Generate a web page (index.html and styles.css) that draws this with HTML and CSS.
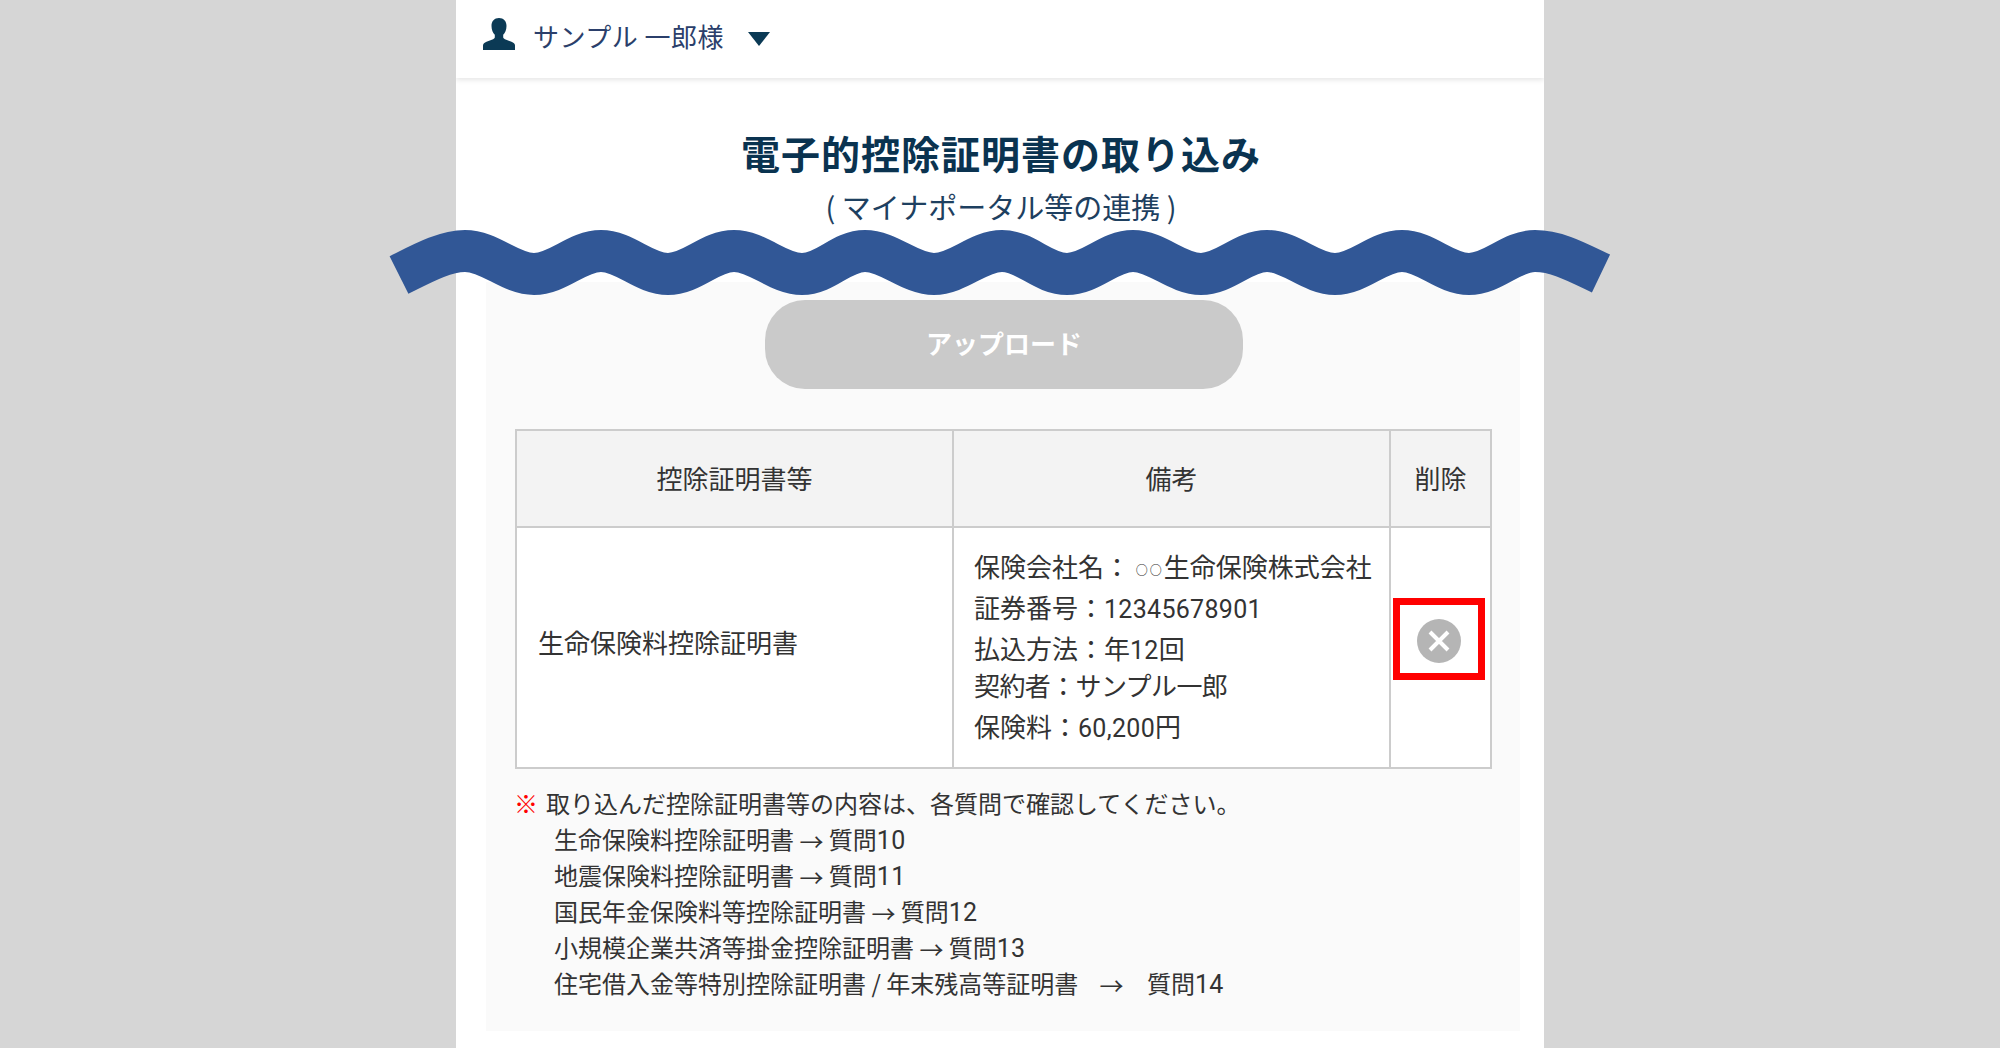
FILE: index.html
```html
<!DOCTYPE html>
<html lang="ja">
<head>
<meta charset="utf-8">
<title>電子的控除証明書の取り込み</title>
<link rel="stylesheet" href="styles.css">
</head>
<body>
<div class="page">
  <header class="topbar">
    <svg class="user-icon" viewBox="0 0 32 32" aria-hidden="true"><path d="M16 0c4.600 0 7.500 3.200 7.500 8 0 3.800-1.500 7-3.300 8.800v2.400c0 1 1 1.700 3 2.500l5.300 2c2 .8 3.500 2 3.500 3.800V32H0v-4.500c0-1.800 1.500-3 3.500-3.800l5.300-2c2-.8 3-1.500 3-2.500v-2.400C10 15 8.500 11.800 8.500 8 8.500 3.200 11.400 0 16 0z"/></svg>
    <span class="user-name">サンプル 一郎様</span>
    <span class="caret"></span>
  </header>
  <section class="heading">
    <h1 class="title">電子的控除証明書の取り込み</h1>
    <p class="subtitle">( マイナポータル等の連携 )</p>
  </section>
  <main class="panel">
    <button class="upload" type="button">アップロード</button>
    <table class="doc-table">
      <colgroup><col class="col-a"><col class="col-b"><col class="col-c"></colgroup>
      <thead>
        <tr><th>控除証明書等</th><th>備考</th><th>削除</th></tr>
      </thead>
      <tbody>
        <tr>
          <td class="doc-name">生命保険料控除証明書</td>
          <td class="remarks">
            <div class="line">保険会社名： <span class="circles">○○</span>生命保険株式会社</div>
            <div class="line">証券番号：<span class="num">12345678901</span></div>
            <div class="line">払込方法：年<span class="num">12</span>回</div>
            <div class="line line-tight">契約者：サンプル一郎</div>
            <div class="line">保険料：<span class="num">60,200</span>円</div>
          </td>
          <td class="delete">
            <div class="highlight">
              <svg class="delete-icon" viewBox="0 0 44 44" aria-hidden="true"><circle cx="22" cy="22" r="22"/><path d="M13 13l18 18M31 13L13 31"/></svg>
            </div>
          </td>
        </tr>
      </tbody>
    </table>
    <div class="notes">
      <p class="note-head"><span class="mark">※</span>取り込んだ控除証明書等の内容は、各質問で確認してください。</p>
      <p class="note-item">生命保険料控除証明書 <span class="arrow">→</span> 質問<span class="num">10</span></p>
      <p class="note-item">地震保険料控除証明書 <span class="arrow">→</span> 質問<span class="num">11</span></p>
      <p class="note-item">国民年金保険料等控除証明書 <span class="arrow">→</span> 質問<span class="num">12</span></p>
      <p class="note-item">小規模企業共済等掛金控除証明書 <span class="arrow">→</span> 質問<span class="num">13</span></p>
      <p class="note-item">住宅借入金等特別控除証明書 / 年末残高等証明書 <span class="arrow wide-arrow">→</span> 質問<span class="num">14</span></p>
    </div>
  </main>
  <svg class="wave" viewBox="0 0 1240 90" aria-hidden="true"><path d="M9 46 C33 34 55 22 75 22 C100 22 120 45 144 45 C168 45 187 22 211 22 C235 22 254 45 278 45 C302 45 320 22 344 22 C368 22 388 45 412 45 C436 45 451 22 475 22 C499 22 520 45 544 45 C568 45 588 22 612 22 C636 22 653 45 677 45 C701 45 719 22 743 22 C767 22 787 45 811 45 C835 45 853 22 877 22 C901 22 921 45 945 45 C969 45 988 22 1012 22 C1036 22 1055 45 1079 45 C1103 45 1121 22 1145 22 C1167 22 1187 33 1211 44.500"/></svg>
</div>
</body>
</html>
```
FILE: styles.css
```css
* { box-sizing: border-box; }
html, body { margin: 0; height: 100%; }
body {
  background: #d6d6d6;
  font-family: "Noto Sans CJK JP", "Noto Sans", sans-serif;
  color: #333;
  overflow: hidden;
}
.page {
  position: relative;
  width: 1088px;
  height: 1048px;
  margin: 0 auto;
  background: #fff;
}
.topbar {
  display: flex;
  align-items: center;
  height: 78px;
  padding-left: 27px;
  background: #fff;
  box-shadow: 0 2px 5px rgba(0, 0, 0, .1);
  clip-path: inset(0 0 -10px 0);
}
.user-icon { width: 32px; height: 32px; fill: #0b3a55; margin-top: -10px; }
.user-name {
  margin-left: 18px;
  font-size: 26px;
  letter-spacing: .5px;
  color: #2b3f6b;
  margin-top: -8px;
}
.caret {
  margin-left: 24px;
  width: 0;
  height: 0;
  border-left: 11.500px solid transparent;
  border-right: 11.500px solid transparent;
  border-top: 14px solid #0b3a55;
}
.heading { text-align: center; height: 204px; padding: 48px 0 0 2px; }
.title {
  margin: 0;
  font-size: 39px;
  line-height: 52px;
  font-weight: 700;
  letter-spacing: 1px;
  color: #0a3350;
}
.subtitle {
  margin: 7px 0 0;
  font-size: 29px;
  line-height: 42px;
  color: #1e4060;
}
.panel {
  margin: 0 24px 0 30px;
  height: 749px;
  padding: 18px 29px 0;
  background: #fafafa;
}
.upload {
  display: block;
  width: 478px;
  height: 89px;
  margin: 0 0 0 250px;
  padding: 0 0 5px;
  border: 0;
  border-radius: 40px;
  background: #cacaca;
  color: #fff;
  font: 700 26px "Noto Sans CJK JP", sans-serif;
}
.doc-table {
  width: 975px;
  margin: 40px 0 0;
  border-collapse: collapse;
  table-layout: fixed;
  font-size: 26px;
  background: #fff;
}
.col-a, .col-b { width: 437px; }
.col-c { width: 101px; }
.doc-table th, .doc-table td { border: 2px solid #ccc; padding: 0; }
.doc-table th {
  height: 97px;
  padding-bottom: 2px;
  background: #f3f3f3;
  font-weight: 400;
  text-align: center;
}
.doc-table td { height: 241px; vertical-align: middle; }
.doc-table .doc-name { padding: 0 0 12px 21px; }
.doc-table .remarks { padding: 0 0 5px 20px; line-height: 41px; }
.line { height: 41px; white-space: nowrap; }
.line-tight { margin-top: -4px; letter-spacing: -.6px; }
.circles { font-size: 12px; font-weight: 700; line-height: 0; letter-spacing: 2px; color: #333; vertical-align: 2px; }
.num { font-family: "Roboto", sans-serif; font-size: 25px; letter-spacing: .3px; }
.highlight {
  display: flex;
  align-items: center;
  justify-content: center;
  width: 92px;
  height: 82px;
  margin: -17px 0 0 2px;
  padding-top: 4px;
  border: 7px solid #f00;
}
.delete-icon { width: 44px; height: 44px; }
.delete-icon circle { fill: #b5b5b5; }
.delete-icon path { fill: none; stroke: #fff; stroke-width: 4; }
.notes { margin: 16px 0 0 -1px; font-size: 24px; line-height: 36px; }
.notes p { height: 36px; margin: 0; white-space: nowrap; }
.mark { color: #f00; font-weight: 700; display: inline-block; width: 32px; }
.note-item { padding-left: 40px; }
.arrow { position: relative; top: 2px; }
.wide-arrow { margin: 0 18px 0 16px; }
.wave {
  position: absolute;
  left: -66px;
  top: 229px;
  width: 1240px;
  height: 90px;
  overflow: visible;
  pointer-events: none;
}
.wave path { fill: none; stroke: #315796; stroke-width: 42; }
```
